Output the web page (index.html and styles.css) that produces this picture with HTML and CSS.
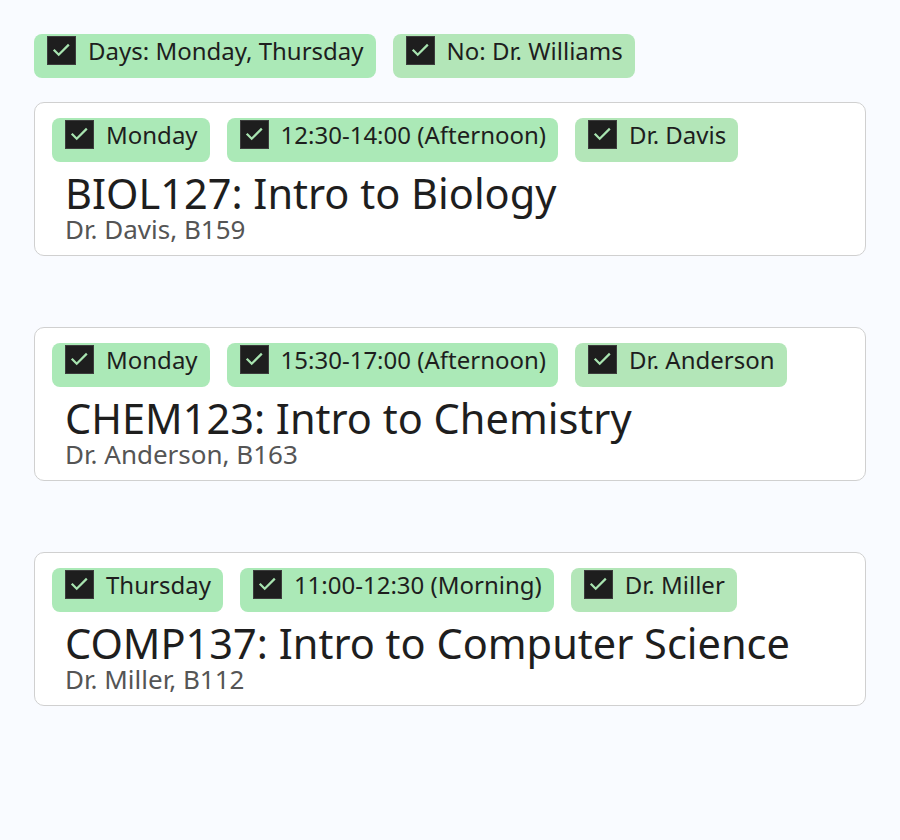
FILE: index.html
```html
<!DOCTYPE html>
<html>
<head>
<meta charset="utf-8">
<link rel="stylesheet" href="styles.css">
</head>
<body>
<div class="filters">
  <div class="chip chip-a"><span class="box"><svg viewBox="0 0 29 29"><path d="M7 14.5l4.5 4.5 10-10"/></svg></span><span>Days: Monday, Thursday</span></div>
  <div class="chip chip-b"><span class="box"><svg viewBox="0 0 29 29"><path d="M7 14.5l4.5 4.5 10-10"/></svg></span><span>No: Dr. Williams</span></div>
</div>
<div class="list">
  <div class="card">
    <div class="chips">
      <div class="chip chip-a"><span class="box"><svg viewBox="0 0 29 29"><path d="M7 14.5l4.5 4.5 10-10"/></svg></span><span>Monday</span></div>
      <div class="chip chip-a"><span class="box"><svg viewBox="0 0 29 29"><path d="M7 14.5l4.5 4.5 10-10"/></svg></span><span>12:30-14:00 (Afternoon)</span></div>
      <div class="chip chip-b"><span class="box"><svg viewBox="0 0 29 29"><path d="M7 14.5l4.5 4.5 10-10"/></svg></span><span>Dr. Davis</span></div>
    </div>
    <div class="title">BIOL127: Intro to Biology</div>
    <div class="sub">Dr. Davis, B159</div>
  </div>
  <div class="card">
    <div class="chips">
      <div class="chip chip-a"><span class="box"><svg viewBox="0 0 29 29"><path d="M7 14.5l4.5 4.5 10-10"/></svg></span><span>Monday</span></div>
      <div class="chip chip-a"><span class="box"><svg viewBox="0 0 29 29"><path d="M7 14.5l4.5 4.5 10-10"/></svg></span><span>15:30-17:00 (Afternoon)</span></div>
      <div class="chip chip-b"><span class="box"><svg viewBox="0 0 29 29"><path d="M7 14.5l4.5 4.5 10-10"/></svg></span><span>Dr. Anderson</span></div>
    </div>
    <div class="title">CHEM123: Intro to Chemistry</div>
    <div class="sub">Dr. Anderson, B163</div>
  </div>
  <div class="card">
    <div class="chips">
      <div class="chip chip-a"><span class="box"><svg viewBox="0 0 29 29"><path d="M7 14.5l4.5 4.5 10-10"/></svg></span><span>Thursday</span></div>
      <div class="chip chip-a"><span class="box"><svg viewBox="0 0 29 29"><path d="M7 14.5l4.5 4.5 10-10"/></svg></span><span>11:00-12:30 (Morning)</span></div>
      <div class="chip chip-b"><span class="box"><svg viewBox="0 0 29 29"><path d="M7 14.5l4.5 4.5 10-10"/></svg></span><span>Dr. Miller</span></div>
    </div>
    <div class="title">COMP137: Intro to Computer Science</div>
    <div class="sub">Dr. Miller, B112</div>
  </div>
</div>
</body>
</html>
```
FILE: styles.css
```css
body {
  margin: 0;
  background: #f9fbff;
  font-family: "Noto Sans", "Open Sans", sans-serif;
  color: #1e1e1e;
  padding: 34px 34px 0 34px;
}
.filters {
  display: flex;
  gap: 17px;
  margin-bottom: 24px;
}
.list {
  display: flex;
  flex-direction: column;
  gap: 71px;
}
.card {
  background: #ffffff;
  border: 1px solid #d0d0d0;
  border-radius: 10px;
  padding: 15px 17px 14px;
}
.chips {
  display: flex;
  gap: 17px;
}
.chip {
  display: flex;
  align-items: center;
  gap: 12px;
  padding: 2px 12px 13px 13px;
  border-radius: 8px;
  font-size: 24px;
  line-height: 29px;
  color: #1e1e1e;
}
.chip-a { background: #abe9b7; }
.chip-b { background: #b3e6b8; }
.box {
  width: 29px;
  height: 29px;
  box-sizing: border-box;
  background: #1e1e1e;
  border: 1px solid #3c3c3c;
  display: flex;
  flex: none;
}
.box svg {
  width: 27px;
  height: 27px;
}
.box path {
  fill: none;
  stroke: #a8e4b0;
  stroke-width: 2.4;
  stroke-linecap: square;
}
.title {
  margin-left: 13px;
  margin-top: 7px;
  font-size: 41.5px;
  line-height: 48px;
}
.sub {
  margin-left: 13px;
  font-size: 26px;
  line-height: 24px;
  color: #555555;
}
```
